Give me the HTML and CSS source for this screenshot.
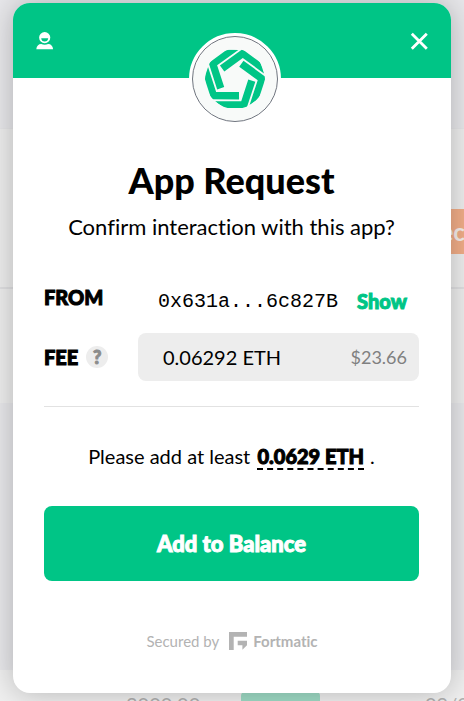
FILE: index.html
```html
<!DOCTYPE html>
<html lang="en">
  <head>
    <title>App Request</title>
    <meta charset="utf-8">
    <meta name="viewport" content="width=device-width, initial-scale=1">
    <link rel="stylesheet" href="styles.css">
  </head>
  <body>
    <!-- page behind the modal -->
    <div class="page">
      <div class="panel">
        <div class="panel-top"><span class="connect">Connect</span></div>
        <div class="panel-body"></div>
      </div>
      <div class="history">
        <span class="amount">2000.00</span>
        <span class="status">Open</span>
        <span class="date">09/0</span>
      </div>
    </div>

    <div class="overlay">
      <div class="modal">
        <header class="header">
          <button class="icon-btn" type="button" aria-label="Account">
            <svg width="18" height="18" viewBox="0 0 18 18" fill="#fff">
              <path fill-rule="evenodd" d="M8.700 0a5.600 5.600 0 0 1 0 11.200a5.600 5.600 0 0 1 0-11.200zM5.200 6.200c.1 2 1.500 3.300 3.500 3.300s3.400-1.300 3.500-3.300z"/>
              <path d="M.3 17.300C.6 14 2.500 12 5.200 12c1.200.5 2.300.7 3.500.7s2.300-.2 3.500-.7c2.700 0 4.600 2 4.900 5.300z"/>
            </svg>
          </button>
          <button class="icon-btn" type="button" aria-label="Close">
            <svg width="18" height="18" viewBox="0 0 18 18">
              <path stroke="#fff" stroke-width="2.800" d="M1.800 1.800l15 15M16.800 1.800l-15 15"/>
            </svg>
          </button>
          <div class="logo">
            <svg width="60" height="60" viewBox="-90 -91 180 180" fill="#00c586">
              <defs>
                <path id="ribbon" d="M-60 65.500H18.700L39.800 .3L61 7L35 86H-32z"/>
              </defs>
              <use href="#ribbon"/>
              <use href="#ribbon" transform="rotate(72)"/>
              <use href="#ribbon" transform="rotate(144)"/>
              <use href="#ribbon" transform="rotate(216)"/>
              <use href="#ribbon" transform="rotate(288)"/>
            </svg>
          </div>
        </header>

        <main class="content">
          <h1 class="title">App Request</h1>
          <p class="subtitle">Confirm interaction with this app?</p>

          <div class="details">
            <div class="row">
              <span class="label label-from">FROM</span>
              <div class="from">
                <span class="address">0x631a...6c827B</span>
                <button class="show" type="button">Show</button>
              </div>
            </div>
            <div class="row">
              <span class="label">FEE <button class="help" type="button" aria-label="About the fee">?</button></span>
              <div class="fee">
                <span class="fee-eth">0.06292 ETH</span>
                <span class="fee-usd">$23.66</span>
              </div>
            </div>
          </div>

          <p class="notice">Please add at least <strong class="minimum">0.0629 ETH</strong> .</p>
          <button class="add-btn" type="button">Add to Balance</button>
        </main>

        <footer class="footer">
          <span>Secured by</span>
          <svg class="footer-logo" width="18" height="18" viewBox="0 0 18 18" fill="#b3b3b3">
            <path d="M0 0h18v4.700H4.700V18H0z"/>
            <path d="M8.700 8.700H18v4.600l-4.600 4.400v-4.400H8.700z"/>
          </svg>
          <b>Fortmatic</b>
        </footer>
      </div>
    </div>
  </body>
</html>
```

FILE: styles.css
```css
* {
  box-sizing: border-box;
}
body {
  margin: 0;
  font-family: "Proxima Nova", Lato, sans-serif;
  font-variant-ligatures: none;
  color: #000;
  background-color: #e8e8eb;
}
button {
  font-family: inherit;
  border: none;
  padding: 0;
  background: none;
  cursor: pointer;
}

/* page behind */
.page {
  height: 100vh;
  overflow: hidden;
  padding-top: 128px;
}
.panel {
  background-color: #eeeeee;
  border-top: 1px solid #e6e6e8;
}
.panel-top {
  height: 160px;
  padding-top: 80px;
  border-bottom: 2px solid #e0e0e2;
  display: flex;
  justify-content: flex-end;
}
.connect {
  width: 100px;
  height: 45px;
  line-height: 45px;
  margin-right: -16px;
  padding-left: 4px;
  font-size: 24px;
  font-weight: 700;
  color: #f6efec;
  background-color: #f2ae88;
}
.panel-body {
  height: 114px;
}
.history {
  display: flex;
  margin-top: 267px;
  padding: 22px 0 22px 126px;
  font-size: 20px;
  line-height: 24px;
  color: #b0b0b0;
  background-color: #f0f0f0;
}
.amount {
  flex: none;
  width: 115px;
}
.status {
  flex: none;
  width: 79px;
  padding: 4px 0 4px 13px;
  margin-right: 105px;
  border-radius: 4px;
  font-size: 18px;
  color: #e4f4ee;
  background-color: #9fdcc6;
}

/* modal */
.overlay {
  position: absolute;
  top: 0;
  left: 0;
  right: 0;
  padding: 3px 13px 8px;
}
.modal {
  background-color: #fff;
  border-radius: 17px;
  box-shadow: 0 0 30px rgba(0, 0, 0, 0.25);
}
.header {
  position: relative;
  display: flex;
  justify-content: space-between;
  height: 75px;
  padding: 29px 23px 0;
  border-radius: 17px 17px 0 0;
  background-color: #00c586;
}
.icon-btn {
  width: 18px;
  height: 18px;
}
.icon-btn svg {
  display: block;
}
/* white ring around the app logo */
.logo {
  position: absolute;
  top: 30px;
  left: 50%;
  width: 92px;
  height: 92px;
  margin-left: -43px;
  display: flex;
  align-items: center;
  justify-content: center;
  border: 3px solid #fff;
  border-radius: 50%;
  background-color: #fff;
}
.logo svg {
  box-sizing: content-box;
  padding: 12px;
  border: 1px solid #70757f;
  border-radius: 50%;
  background-color: #f8faf9;
}
.content {
  padding: 80px 32px 0 31px;
  text-align: center;
}
.title {
  margin: 0;
  font-size: 36px;
  line-height: 44px;
  font-weight: 900;
}
.subtitle {
  margin: 10px 0 34px;
  font-size: 22px;
  line-height: 30px;
}
.details {
  padding-bottom: 25px;
  border-bottom: 1px solid #e2e2e2;
}
.row {
  display: flex;
  margin-bottom: 7px;
}
.row:last-child {
  margin-bottom: 0;
}
.label {
  display: flex;
  align-items: center;
  width: 94px;
  font-size: 20px;
  font-weight: 900;
  -webkit-text-stroke: 1px;
}
.label-from {
  height: 42px;
}
.help {
  width: 22px;
  height: 22px;
  margin-left: 8px;
  border-radius: 50%;
  font-size: 18px;
  line-height: 22px;
  font-weight: 900;
  color: #8c8c8c;
  background-color: #ededed;
}
.from {
  flex: 1;
  display: flex;
  align-items: center;
  height: 50px;
  padding-left: 20px;
}
.address {
  margin-right: 19px;
  font-family: "Liberation Mono", monospace;
  font-size: 20px;
}
.show {
  font-size: 20px;
  font-weight: 900;
  color: #00c586;
  -webkit-text-stroke: 1px;
}
.fee {
  flex: 1;
  display: flex;
  align-items: center;
  justify-content: space-between;
  height: 48px;
  padding: 0 12px 0 25px;
  border-radius: 8px;
  background-color: #ededed;
}
.fee-eth {
  font-size: 20px;
}
.fee-usd {
  font-size: 18px;
  color: #808080;
}
.notice {
  margin: 37px 0 38px;
  font-size: 20px;
  line-height: 24px;
}
.minimum {
  margin: 0 1px 0 2px;
  border-bottom: 2px dashed #000;
  font-weight: 900;
  -webkit-text-stroke: 1px;
}
.add-btn {
  display: block;
  width: 100%;
  height: 75px;
  border-radius: 8px;
  font-size: 22px;
  font-weight: 900;
  color: #fff;
  background-color: #00c586;
  -webkit-text-stroke: 1px;
}
.footer {
  display: flex;
  justify-content: center;
  align-items: center;
  padding: 50px 0 42px;
  font-size: 15px;
  line-height: 20px;
  color: #b3b3b3;
}
.footer-logo {
  margin: 0 6px 0 10px;
}
```
